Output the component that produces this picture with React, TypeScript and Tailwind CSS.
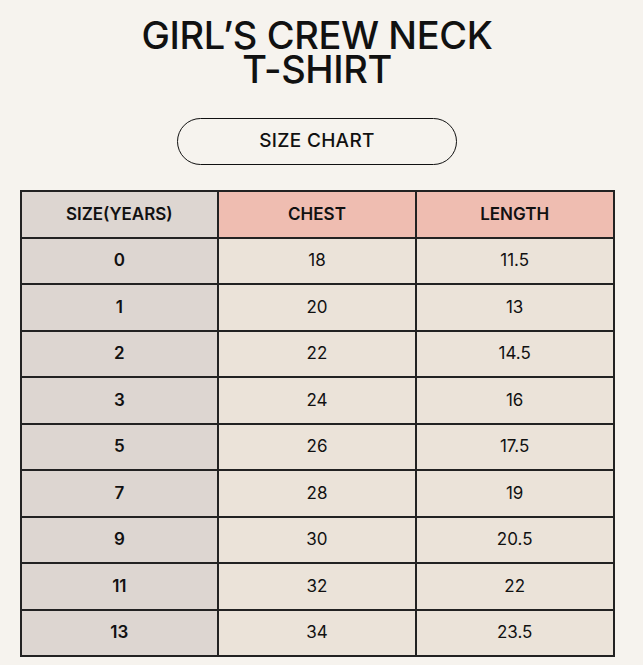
import React from 'react';

const rows: [string, string, string][] = [
  ['0', '18', '11.5'],
  ['1', '20', '13'],
  ['2', '22', '14.5'],
  ['3', '24', '16'],
  ['5', '26', '17.5'],
  ['7', '28', '19'],
  ['9', '30', '20.5'],
  ['11', '32', '22'],
  ['13', '34', '23.5'],
];

const App = () => (
  <div
    className="flex h-[665px] w-[643px] flex-col items-center bg-[#f6f3ee] pr-[9px] text-[#111]"
    style={{ fontFamily: 'Inter, "Liberation Sans", sans-serif' }}
  >
    <h1 className="mt-[18px] text-center text-[38px] font-medium leading-[34px] tracking-[-0.4px]">
      GIRL’S CREW NECK
      <br />
      T-SHIRT
    </h1>
    <div className="mt-[32px] flex h-[47px] w-[280px] items-center justify-center rounded-full border-[1.5px] border-[#111] text-[19px] font-medium tracking-[0.3px]">
      SIZE CHART
    </div>
    <table className="mt-[25px] w-[595px] table-fixed border-collapse border-2 border-[#222] text-[17px]">
      <thead>
        <tr className="h-[46.5px]">
          <th className="w-1/3 border-2 border-[#222] bg-[#ddd6d1] font-semibold">SIZE(YEARS)</th>
          <th className="w-1/3 border-2 border-[#222] bg-[#efbdb1] font-semibold">CHEST</th>
          <th className="w-1/3 border-2 border-[#222] bg-[#efbdb1] font-semibold">LENGTH</th>
        </tr>
      </thead>
      <tbody>
        {rows.map(([size, chest, length]) => (
          <tr key={size} className="h-[46.5px]">
            <td className="border-2 border-[#222] bg-[#ddd6d1] text-center font-semibold">{size}</td>
            <td className="border-2 border-[#222] bg-[#ebe3d9] text-center">{chest}</td>
            <td className="border-2 border-[#222] bg-[#ebe3d9] text-center">{length}</td>
          </tr>
        ))}
      </tbody>
    </table>
  </div>
);

export default App;
